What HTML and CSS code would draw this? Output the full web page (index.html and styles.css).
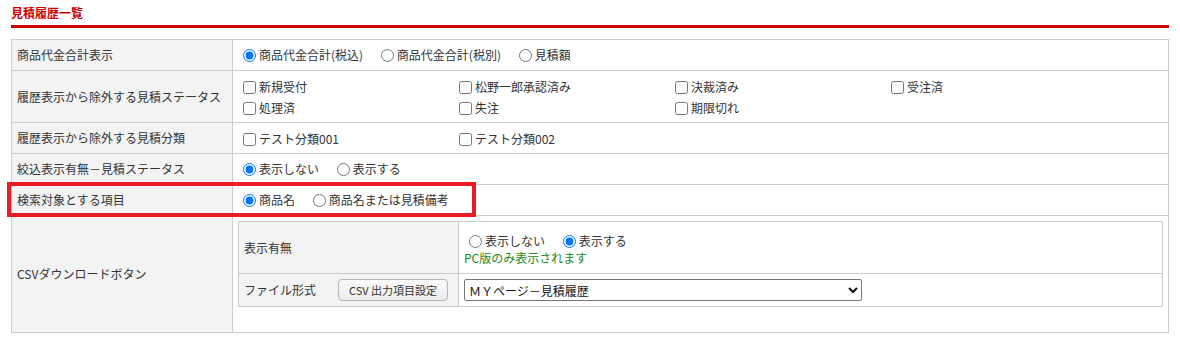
FILE: index.html
```html
<!DOCTYPE html>
<html lang="ja">
<head>
  <meta charset="utf-8">
  <title>見積履歴一覧</title>
  <link rel="stylesheet" href="styles.css">
</head>
<body>
  <div class="page">
    <h2 class="page-title">見積履歴一覧</h2>

    <table class="settings">
      <tr>
        <th>商品代金合計表示</th>
        <td>
          <label class="choice"><input type="radio" name="total" checked>商品代金合計(税込)</label>
          <label class="choice"><input type="radio" name="total">商品代金合計(税別)</label>
          <label class="choice"><input type="radio" name="total">見積額</label>
        </td>
      </tr>
      <tr>
        <th>履歴表示から除外する見積ステータス</th>
        <td>
          <div class="check-list">
            <label><input type="checkbox">新規受付</label>
            <label><input type="checkbox">松野一郎承認済み</label>
            <label><input type="checkbox">決裁済み</label>
            <label><input type="checkbox">受注済</label>
            <label><input type="checkbox">処理済</label>
            <label><input type="checkbox">失注</label>
            <label><input type="checkbox">期限切れ</label>
          </div>
        </td>
      </tr>
      <tr>
        <th>履歴表示から除外する見積分類</th>
        <td>
          <div class="check-list">
            <label><input type="checkbox">テスト分類001</label>
            <label><input type="checkbox">テスト分類002</label>
          </div>
        </td>
      </tr>
      <tr>
        <th>絞込表示有無－見積ステータス</th>
        <td>
          <label class="choice"><input type="radio" name="filter" checked>表示しない</label>
          <label class="choice"><input type="radio" name="filter">表示する</label>
        </td>
      </tr>
      <tr>
        <th>検索対象とする項目</th>
        <td>
          <label class="choice"><input type="radio" name="target" checked>商品名</label>
          <label class="choice"><input type="radio" name="target">商品名または見積備考</label>
        </td>
      </tr>
      <tr>
        <th>CSVダウンロードボタン</th>
        <td class="nested-cell">
          <table class="sub-settings">
            <tr class="sub-show">
              <th>表示有無</th>
              <td>
                <label class="choice"><input type="radio" name="csv" >表示しない</label>
                <label class="choice"><input type="radio" name="csv" checked>表示する</label>
                <div class="note">PC版のみ表示されます</div>
              </td>
            </tr>
            <tr>
              <th>
                <div class="file-head">
                  <span>ファイル形式</span>
                  <button class="btn" type="button">CSV 出力項目設定</button>
                </div>
              </th>
              <td>
                <select class="format-select">
                  <option>ＭＹページ－見積履歴</option>
                </select>
              </td>
            </tr>
          </table>
        </td>
      </tr>
    </table>

    <!-- highlight frame drawn over the search target row -->
    <div class="highlight"></div>
  </div>
</body>
</html>
```

FILE: styles.css
```css
body {
  margin: 0;
  background: #fff;
  color: #333;
  font-family: "Noto Sans CJK JP", "Noto Sans", sans-serif;
  font-size: 12px;
}

.page {
  position: relative;
  margin: 0 11px;
}

.page-title {
  margin: 0;
  padding: 4px 0 3px;
  font-size: 12px;
  line-height: 18px;
  font-weight: bold;
  color: #c00;
  border-bottom: 3px solid #c00;
}

.settings {
  width: 100%;
  margin-top: 11px;
  border-collapse: collapse;
  border: 1px solid #ccc;
}

.settings th,
.settings td {
  border: 1px solid #ccc;
  padding: 5px;
  line-height: 20px;
  vertical-align: middle;
  text-align: left;
  font-weight: normal;
}

.settings > tbody > tr > th {
  width: 210px;
  background: #f2f3f2;
}

.choice {
  margin-right: 10px;
  white-space: nowrap;
}

.choice input {
  width: 13px;
  height: 13px;
  margin: 0 3px 0 5px;
  vertical-align: -2px;
}

.check-list {
  display: grid;
  grid-template-columns: repeat(4, 216px);
  margin-bottom: -1px;
}

.check-list label {
  height: 21px;
  line-height: 21px;
  white-space: nowrap;
}

.check-list input {
  width: 13px;
  height: 13px;
  margin: 0 3px 0 5px;
  vertical-align: -2px;
}

.nested-cell {
  padding-bottom: 25px !important;
}

.sub-settings {
  width: 100%;
  border-collapse: collapse;
  border: 1px solid #ccc;
}

.sub-settings th {
  width: 209px;
  background: #f2f3f2;
}

.sub-show th,
.sub-show td {
  height: 41px;
}

.note {
  color: #1a8a1a;
  line-height: 14px;
}

.file-head {
  display: flex;
  justify-content: space-between;
  align-items: center;
}

.btn {
  height: 22px;
  margin-right: 5px;
  padding: 0 10px;
  font-family: inherit;
  font-size: 11px;
  color: #333;
  background: linear-gradient(#fafafa, #ececec);
  border: 1px solid #b5b5b5;
  border-radius: 4px;
}

.format-select {
  width: 398px;
  height: 22px;
  font-family: inherit;
  font-size: 12px;
  color: #111;
  border: 1px solid #767676;
  border-radius: 2px;
  background: #fff;
}

.highlight {
  position: absolute;
  left: -4px;
  top: 182px;
  width: 469px;
  height: 35px;
  box-sizing: border-box;
  border: 4px solid #ed1c24;
  pointer-events: none;
}
```
